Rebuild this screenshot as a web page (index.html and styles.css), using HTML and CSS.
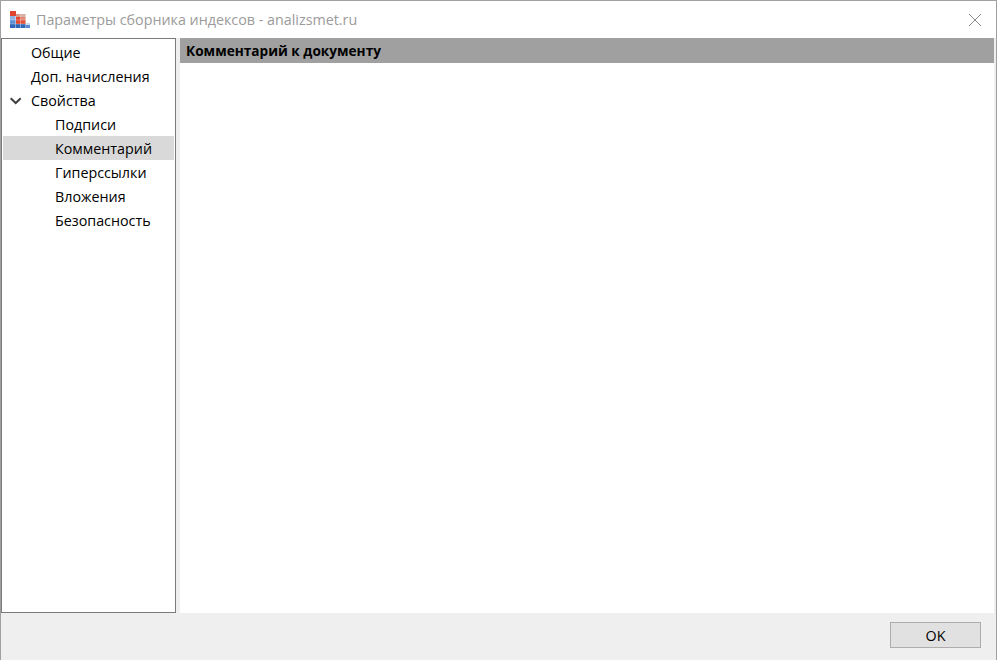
FILE: index.html
```html
<!DOCTYPE html>
<html lang="ru">
<head>
  <meta charset="UTF-8">
  <meta name="viewport" content="width=device-width, initial-scale=1.0">
  <title>Параметры сборника индексов - analizsmet.ru</title>
  <link rel="stylesheet" href="styles.css">
</head>
<body>
  <div class="window">
    <!-- Title bar -->
    <header class="title-bar">
      <svg class="app-icon" width="20" height="18" viewBox="0 0 20 18">
        <!-- red blocks -->
        <rect x="0" y="0" width="6" height="5" fill="#e2432f"/>
        <rect x="6" y="3" width="5" height="3" fill="#d99a8c"/>
        <rect x="11" y="3" width="5" height="3" fill="#d8b0a6"/>
        <rect x="6" y="6" width="5" height="7" fill="#e2472f"/>
        <rect x="11" y="6" width="5" height="3" fill="#e28a78"/>
        <rect x="11" y="9" width="5" height="4" fill="#e2533c"/>
        <!-- blue blocks -->
        <rect x="0" y="5" width="6" height="4" fill="#8fb4e4"/>
        <rect x="0" y="9" width="6" height="4" fill="#5f90d6"/>
        <rect x="0" y="13" width="16" height="4" fill="#2f66b8"/>
        <rect x="16" y="12" width="4" height="2" fill="#c8d8ee"/>
        <rect x="16" y="14" width="4" height="3" fill="#5a8cd0"/>
        <!-- seams -->
        <path d="M5.5 5 V17 M10.5 3 V17 M15.5 3 V17" stroke="#fff" stroke-opacity="0.4" stroke-width="1" fill="none"/>
        <path d="M0 9 H16 M0 13 H16" stroke="#fff" stroke-opacity="0.3" stroke-width="1" fill="none"/>
      </svg>
      <span class="title-text">Параметры сборника индексов - analizsmet.ru</span>
      <svg class="close-icon" width="14" height="14" viewBox="0 0 14 14">
        <path d="M1 1 L13 13 M13 1 L1 13" stroke="#8a8a8a" stroke-width="1" fill="none"/>
      </svg>
    </header>

    <div class="content">
      <!-- Tree -->
      <ul class="tree">
        <li class="tree-item">Общие</li>
        <li class="tree-item">Доп. начисления</li>
        <li class="tree-item">
          <svg class="chevron" width="12" height="8" viewBox="0 0 12 8">
            <path d="M0.7 1.2 L5.7 6 L10.7 1.2" stroke="#404040" stroke-width="2" fill="none"/>
          </svg>
          Свойства
        </li>
        <li class="tree-item child">Подписи</li>
        <li class="tree-item child selected">Комментарий</li>
        <li class="tree-item child">Гиперссылки</li>
        <li class="tree-item child">Вложения</li>
        <li class="tree-item child">Безопасность</li>
      </ul>

      <!-- Page -->
      <main class="page">
        <h2 class="page-header">Комментарий к документу</h2>
      </main>
    </div>

    <footer class="footer">
      <button class="ok-button">OK</button>
    </footer>
  </div>
</body>
</html>
```

FILE: styles.css
```css
* {
  box-sizing: border-box;
  margin: 0;
  padding: 0;
}

html, body {
  height: 100%;
  overflow: hidden;
}

body {
  font-family: 'Open Sans', 'Noto Sans', Arial, sans-serif;
  font-size: 14.3px;
  color: #000;
  background-color: #fff;
}

.window {
  display: flex;
  flex-direction: column;
  height: 660px;
  border: 1px solid #a0a0a0;
  border-bottom: none;
  background-color: #efefef;
}

.title-bar {
  display: flex;
  align-items: center;
  height: 37px;
  flex: none;
  padding: 0 14px 0 9px;
  background-color: #fff;
}

.app-icon {
  flex: none;
  margin-right: 6px;
}

.title-text {
  flex: 1;
  color: #9b9b9b;
}

.content {
  display: flex;
  height: 575px;
  flex: none;
}

.tree {
  width: 175px;
  flex: none;
  padding: 1px;
  border: 1px solid #7a7a7a;
  background-color: #fff;
  list-style: none;
}

.tree-item {
  position: relative;
  height: 24px;
  line-height: 26px;
  padding-left: 28px;
  white-space: nowrap;
}

.tree-item.child {
  padding-left: 52px;
}

.tree-item.selected {
  background-color: #d9d9d9;
}

.chevron {
  position: absolute;
  left: 7px;
  top: 9px;
}

.page {
  flex: 1;
  margin: 0 2px 0 4px;
  background-color: #fff;
}

.page-header {
  height: 25px;
  line-height: 25px;
  padding-left: 6px;
  font-size: 13.65px;
  font-weight: 700;
  background-color: #a0a0a0;
}

.footer {
  display: flex;
  justify-content: flex-end;
  flex: 1;
  padding: 9px 15px 0 0;
}

.ok-button {
  width: 91px;
  height: 26px;
  border: 1px solid #adadad;
  background-color: #e1e1e1;
  font-family: inherit;
  font-size: 14.3px;
  color: #000;
}
```
